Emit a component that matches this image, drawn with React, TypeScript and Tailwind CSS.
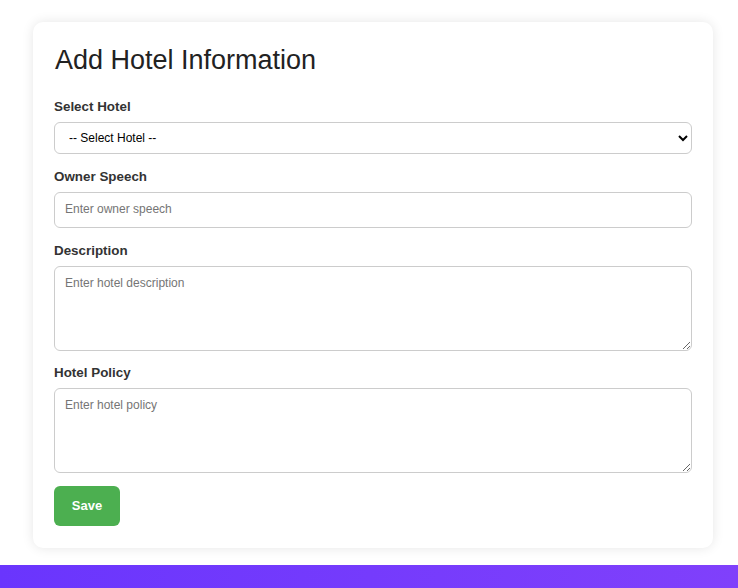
import React from 'react';

const fieldBase =
  'block w-full rounded-[6px] border border-[#cccccc] bg-white px-[10px] text-[12px] text-black placeholder:text-[#757575] outline-none';

const Label: React.FC<{ children: React.ReactNode }> = ({ children }) => (
  <label className="mb-[7px] block text-[13.4px] font-bold leading-[17px] text-[#333333]">{children}</label>
);

const App: React.FC = () => {
  return (
    <div className="h-[588px] overflow-hidden bg-white font-['Liberation_Sans',Arial,sans-serif]">
      <div className="pt-[22px]">
        <div className="ml-[33px] w-[680px] rounded-[10px] bg-white px-[21px] pt-[23px] pb-[22px] shadow-[0_0_12px_rgba(0,0,0,0.1)]">
          <h2 className="mb-[22px] pl-px text-[27px] font-normal leading-[31px] text-[#222222]">Add Hotel Information</h2>

          <div className="mb-[14px]">
            <Label>Select Hotel</Label>
            <select className={`${fieldBase} h-[32px]`} defaultValue="">
              <option value="">-- Select Hotel --</option>
            </select>
          </div>

          <div className="mb-[14px]">
            <Label>Owner Speech</Label>
            <input className={`${fieldBase} h-[36px] pb-[2px]`} placeholder="Enter owner speech" />
          </div>

          <div className="mb-[13px]">
            <Label>Description</Label>
            <textarea className={`${fieldBase} h-[85px] py-[7px]`} placeholder="Enter hotel description" />
          </div>

          <div className="mb-[13px]">
            <Label>Hotel Policy</Label>
            <textarea className={`${fieldBase} h-[85px] py-[7px]`} placeholder="Enter hotel policy" />
          </div>

          <button className="h-[40px] w-[66px] rounded-[6px] bg-[#4caf50] text-[13px] font-bold text-white">
            Save
          </button>
        </div>
      </div>
      <div className="mt-[17px] h-[60px] bg-gradient-to-r from-[#6a35fd] to-[#8040fb]" />
    </div>
  );
};

export default App;
